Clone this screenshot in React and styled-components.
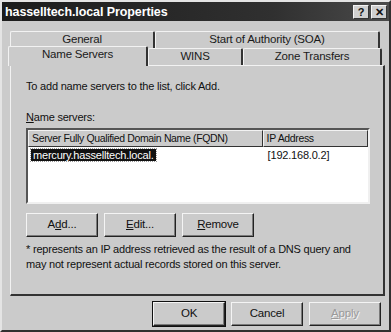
import React from "react";
import styled, { createGlobalStyle } from "styled-components";

const Global = createGlobalStyle`
  html, body { margin: 0; padding: 0; background: #cbcbcb; }
  body {
    font-family: "Liberation Sans", Arial, sans-serif;
    font-size: 11px;
    letter-spacing: -0.2px;
    color: #111;
  }
`;

const Window = styled.div`
  width: 391px;
  height: 332px;
  box-sizing: border-box;
  background: #cbcbcb;
  border: 2px solid;
  border-color: #e4e4e4 #303030 #303030 #e4e4e4;
  display: flex;
  flex-direction: column;
`;

const TitleBar = styled.div`
  height: 19px;
  background: linear-gradient(90deg, #1c1c1c, #303030 70%, #4a4a4a);
  display: flex;
  align-items: center;
  justify-content: space-between;
  padding: 0 2px 0 3px;
`;

const Title = styled.span`
  color: #fff;
  font-weight: bold;
  font-size: 12.5px;
  letter-spacing: -0.1px;
`;

const Caps = styled.div`
  display: flex;
  gap: 2px;
`;

const CapButton = styled.div`
  width: 16px;
  height: 14px;
  box-sizing: border-box;
  background: #cfcfcf;
  border: 1px solid;
  border-color: #f4f4f4 #333 #333 #f4f4f4;
  font-size: 11px;
  font-weight: bold;
  line-height: 12px;
  text-align: center;
  color: #111;
`;

const Body = styled.div`
  flex: 1;
  padding: 10px 6px 0 6px;
  display: flex;
  flex-direction: column;
`;

const TabRow = styled.div`
  display: flex;
  padding-left: ${p => p.$indent}px;
  height: 17px;
  position: relative;
  z-index: ${p => p.$front ? 2 : 1};
`;

const Tab = styled.div`
  width: ${p => p.$w}px;
  box-sizing: border-box;
  height: ${p => p.$active ? 20 : 17}px;
  margin-top: ${p => p.$active ? -2 : 0}px;
  background: #cbcbcb;
  border-top: 1px solid #f2f2f2;
  border-left: 1px solid #f2f2f2;
  border-right: 2px solid #333;
  border-radius: 2px 2px 0 0;
  text-align: center;
  line-height: 15px;
  font-size: 11.5px;
  color: #1a1a1a;
`;

const Panel = styled.div`
  flex: 1;
  margin: 0 0 0 2px;
  width: 375px;
  box-sizing: border-box;
  border: 1px solid;
  border-color: #f2f2f2 #333 #333 #f2f2f2;
  border-right-width: 2px;
  border-bottom-width: 2px;
  padding: 13px 0 0 15px;
  display: flex;
  flex-direction: column;
`;

const Text = styled.div`
  line-height: 15px;
  margin-top: ${p => p.$mt || 0}px;
  margin-bottom: ${p => p.$mb || 0}px;
  white-space: nowrap;
`;

const ListBox = styled.div`
  width: 344px;
  height: 76px;
  box-sizing: border-box;
  background: #fff;
  border: 2px solid;
  border-color: #555 #f0f0f0 #f0f0f0 #555;
  display: flex;
  flex-direction: column;
`;

const Header = styled.div`
  display: flex;
  height: 17px;
`;

const HeaderCell = styled.div`
  width: ${p => p.$w}px;
  box-sizing: border-box;
  background: #cbcbcb;
  border: 1px solid;
  border-color: #f2f2f2 #333 #333 #f2f2f2;
  padding-left: 3px;
  font-size: 10.5px;
  letter-spacing: -0.35px;
  line-height: 14px;
  white-space: nowrap;
  overflow: hidden;
`;

const Row = styled.div`
  display: flex;
  height: 14px;
  margin-top: 1px;
`;

const Cell = styled.div`
  width: ${p => p.$w}px;
  padding-left: ${p => p.$pl}px;
  box-sizing: border-box;
  line-height: 14px;
`;

const Selected = styled.span`
  background: #111;
  color: #fff;
  padding: 0 2px;
  outline: 1px dotted #999;
`;

const ButtonRow = styled.div`
  display: flex;
  gap: ${p => p.$gap}px;
  margin-top: ${p => p.$mt || 0}px;
  justify-content: ${p => p.$end ? "flex-end" : "flex-start"};
`;

const Button = styled.div`
  width: ${p => p.$w || 72}px;
  height: 24px;
  box-sizing: border-box;
  background: #cbcbcb;
  border: 1px solid;
  border-color: #f4f4f4 #222 #222 #f4f4f4;
  box-shadow: inset -1px -1px 0 #7a7a7a ${p => p.$default ? ", 0 0 0 1px #111" : ""};
  text-align: center;
  line-height: 21px;
  font-size: 11.5px;
  color: ${p => p.$disabled ? "#9a9a9a" : "#111"};
  text-shadow: ${p => p.$disabled ? "1px 1px 0 #f4f4f4" : "none"};
`;

const Footer = styled.div`
  padding: 6px 2px 0 0;
  height: 34px;
  box-sizing: border-box;
`;

export default function App() {
  return (
    <>
      <Global />
      <Window>
        <TitleBar>
          <Title>hasselltech.local Properties</Title>
          <Caps>
            <CapButton>?</CapButton>
            <CapButton>✕</CapButton>
          </Caps>
        </TitleBar>
        <Body>
          <TabRow $indent={2}>
            <Tab $w={145}>General</Tab>
            <Tab $w={225}>Start of Authority (SOA)</Tab>
          </TabRow>
          <TabRow $indent={0} $front>
            <Tab $w={140} $active>Name Servers</Tab>
            <Tab $w={95}>WINS</Tab>
            <Tab $w={139}>Zone Transfers</Tab>
          </TabRow>
          <Panel>
            <Text $mb={16}>To add name servers to the list, click Add.</Text>
            <Text $mb={3}><u>N</u>ame servers:</Text>
            <ListBox>
              <Header>
                <HeaderCell $w={236}>Server Fully Qualified Domain Name (FQDN)</HeaderCell>
                <HeaderCell $w={106}>IP Address</HeaderCell>
              </Header>
              <Row>
                <Cell $w={236} $pl={3}><Selected>mercury.hasselltech.local.</Selected></Cell>
                <Cell $w={106} $pl={5}>[192.168.0.2]</Cell>
              </Row>
            </ListBox>
            <ButtonRow $gap={6} $mt={9}>
              <Button>A<u>d</u>d...</Button>
              <Button><u>E</u>dit...</Button>
              <Button><u>R</u>emove</Button>
            </ButtonRow>
            <Text $mt={5}>* represents an IP address retrieved as the result of a DNS query and</Text>
            <Text>may not represent actual records stored on this server.</Text>
          </Panel>
          <Footer>
            <ButtonRow $gap={6} $end>
              <Button $default>OK</Button>
              <Button>Cancel</Button>
              <Button $disabled><u>A</u>pply</Button>
            </ButtonRow>
          </Footer>
        </Body>
      </Window>
    </>
  );
}
